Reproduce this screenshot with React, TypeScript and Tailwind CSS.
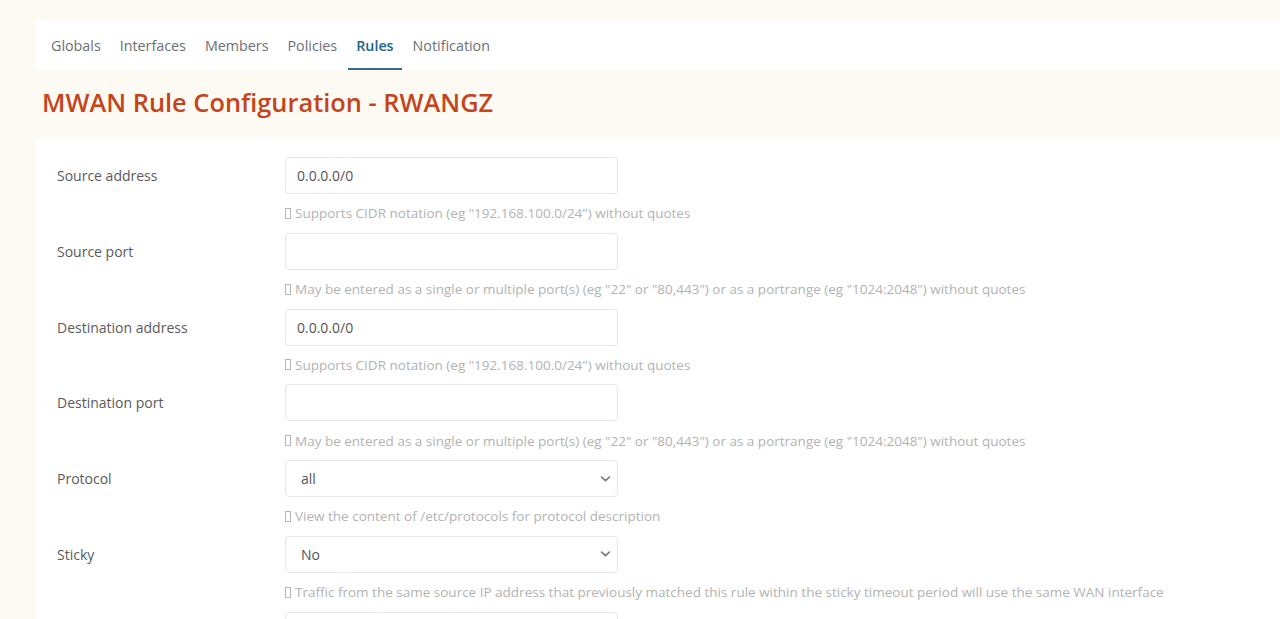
import React from "react";

const font = { fontFamily: '"Open Sans", "Noto Sans", sans-serif' };

function Tofu() {
  return <span className="inline-block w-[6px] h-[11px] border border-[#b5b5b5] align-[-1px] mr-[4px]" />;
}

function Chevron() {
  return (
    <svg width="11" height="7" viewBox="0 0 11 7" className="absolute right-[6px] top-1/2 -translate-y-1/2">
      <path d="M1.5 1.5 L5.5 5.2 L9.5 1.5" fill="none" stroke="#777" strokeWidth="1.6" strokeLinecap="round" strokeLinejoin="round" />
    </svg>
  );
}

type Row = { label: string; value: string; select?: boolean; help?: string };

const rows: Row[] = [
  { label: "Source address", value: "0.0.0.0/0", help: 'Supports CIDR notation (eg "192.168.100.0/24") without quotes' },
  { label: "Source port", value: "", help: 'May be entered as a single or multiple port(s) (eg "22" or "80,443") or as a portrange (eg "1024:2048") without quotes' },
  { label: "Destination address", value: "0.0.0.0/0", help: 'Supports CIDR notation (eg "192.168.100.0/24") without quotes' },
  { label: "Destination port", value: "", help: 'May be entered as a single or multiple port(s) (eg "22" or "80,443") or as a portrange (eg "1024:2048") without quotes' },
  { label: "Protocol", value: "all", select: true, help: "View the content of /etc/protocols for protocol description" },
  { label: "Sticky", value: "No", select: true, help: "Traffic from the same source IP address that previously matched this rule within the sticky timeout period will use the same WAN interface" },
];

export default function App() {
  const tabs = ["Globals", "Interfaces", "Members", "Policies", "Rules", "Notification"];
  return (
    <div className="bg-[#fdfaf3] pt-[20px] pl-[36px] overflow-hidden h-[619px]" style={font}>
      <div className="bg-white h-[50px] flex items-stretch pl-[7px] gap-[3px]">
        {tabs.map((t) => {
          const active = t === "Rules";
          return (
            <div
              key={t}
              className={
                "px-[8px] pt-[3px] flex items-center text-[14.3px] border-b-2 " +
                (active ? "text-[#23648a] font-semibold border-[#2d6d8f]" : "text-[#6b7075] border-transparent")
              }
            >
              {t}
            </div>
          );
        })}
      </div>
      <div className="h-[67px] flex items-center pl-[6px] pb-[2px]">
        <h1 className="text-[25.4px] font-semibold text-[#c4451c]">MWAN Rule Configuration - RWANGZ</h1>
      </div>
      <div className="bg-white pt-[20px] pl-[21px] h-[600px]">
        {rows.map((r) => (
          <div key={r.label} className="flex">
            <div className="w-[228px] h-[37px] flex items-center text-[14px] text-[#5a5a5a]">{r.label}</div>
            <div className="flex flex-col">
              <div className="relative w-[333px] h-[37px] border border-[#e6e6e6] rounded-[4px] flex items-center text-[14px] text-[#555]">
                <span className={r.select ? "pl-[15px]" : "pl-[11px]"}>{r.value}</span>
                {r.select && <Chevron />}
              </div>
              <div className="h-[38.8px] flex items-center text-[13.5px] text-[#b3b3b3] whitespace-nowrap">
                {r.help && (
                  <>
                    <Tofu />
                    {r.help}
                  </>
                )}
              </div>
            </div>
          </div>
        ))}
        <div className="flex">
          <div className="w-[228px] h-[37px]" />
          <div className="w-[333px] h-[37px] border border-[#e6e6e6] rounded-[4px]" />
        </div>
      </div>
    </div>
  );
}
